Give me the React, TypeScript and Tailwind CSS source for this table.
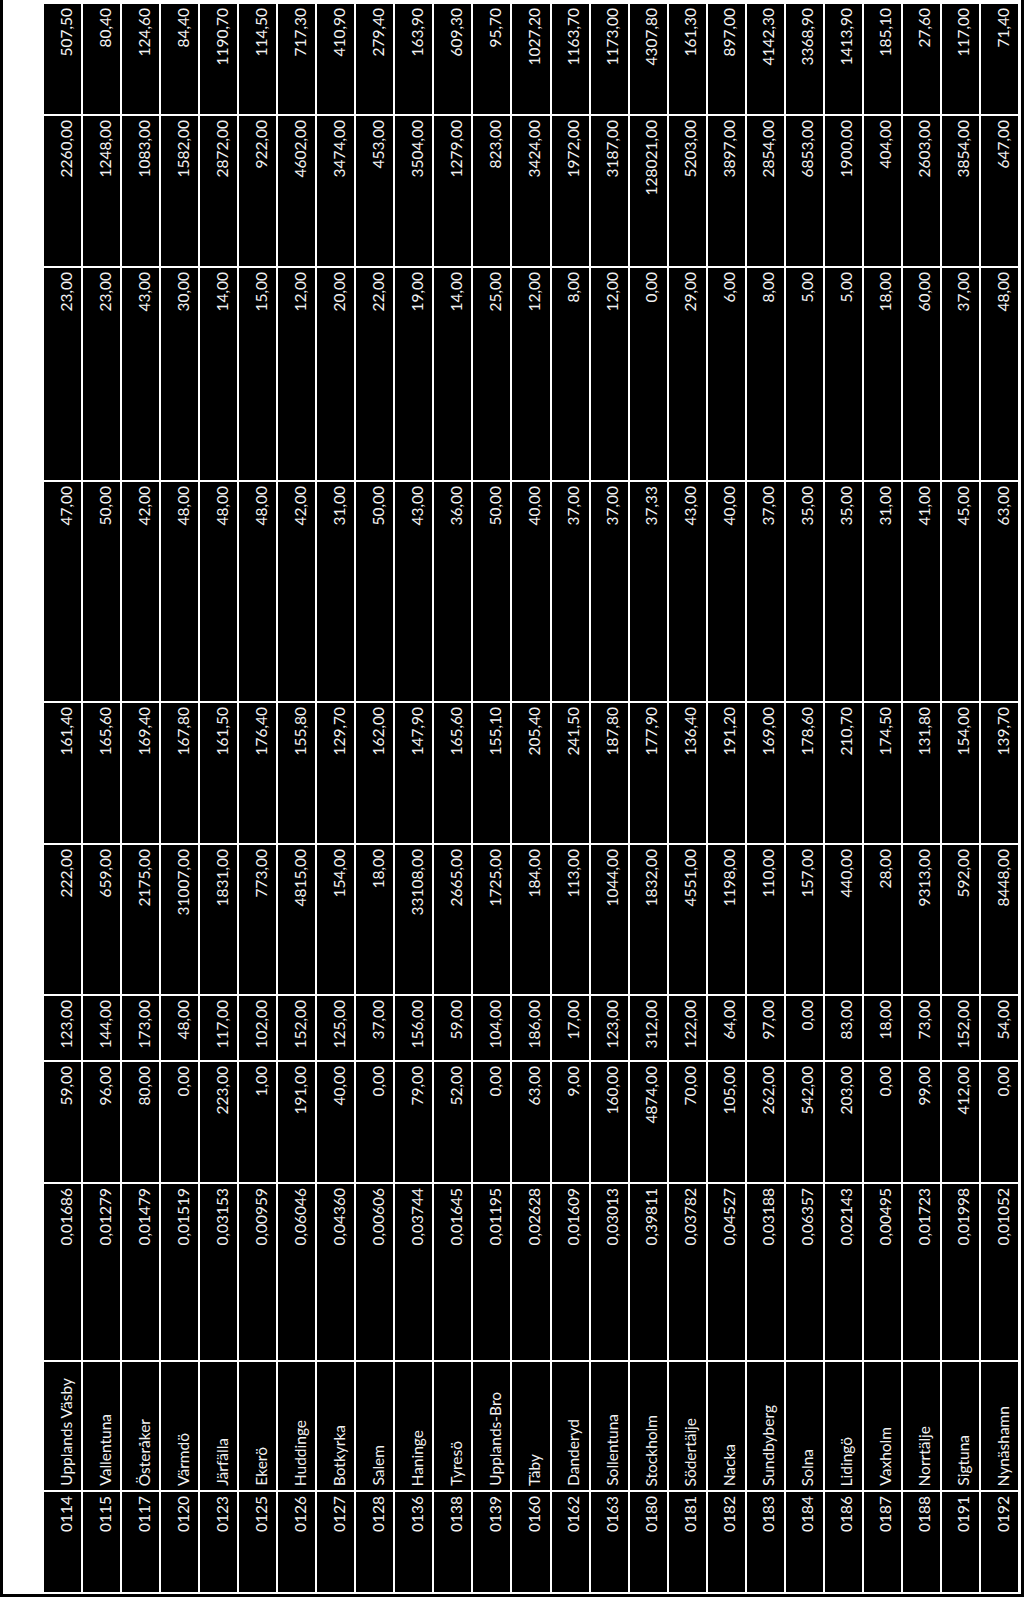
type Kommun = {
  code: string;
  name: string;
  vals: string[];
};

// vals in original column order (left to right in the unrotated sheet)
const kommuner: Kommun[] = [
  { code: '0114', name: 'Upplands Väsby', vals: ['0,01686', '59,00', '123,00', '222,00', '161,40', '47,00', '23,00', '2260,00', '507,50'] },
  { code: '0115', name: 'Vallentuna', vals: ['0,01279', '96,00', '144,00', '659,00', '165,60', '50,00', '23,00', '1248,00', '80,40'] },
  { code: '0117', name: 'Österåker', vals: ['0,01479', '80,00', '173,00', '2175,00', '169,40', '42,00', '43,00', '1083,00', '124,60'] },
  { code: '0120', name: 'Värmdö', vals: ['0,01519', '0,00', '48,00', '31007,00', '167,80', '48,00', '30,00', '1582,00', '84,40'] },
  { code: '0123', name: 'Järfälla', vals: ['0,03153', '223,00', '117,00', '1831,00', '161,50', '48,00', '14,00', '2872,00', '1190,70'] },
  { code: '0125', name: 'Ekerö', vals: ['0,00959', '1,00', '102,00', '773,00', '176,40', '48,00', '15,00', '922,00', '114,50'] },
  { code: '0126', name: 'Huddinge', vals: ['0,06046', '191,00', '152,00', '4815,00', '155,80', '42,00', '12,00', '4602,00', '717,30'] },
  { code: '0127', name: 'Botkyrka', vals: ['0,04360', '40,00', '125,00', '154,00', '129,70', '31,00', '20,00', '3474,00', '410,90'] },
  { code: '0128', name: 'Salem', vals: ['0,00606', '0,00', '37,00', '18,00', '162,00', '50,00', '22,00', '453,00', '279,40'] },
  { code: '0136', name: 'Haninge', vals: ['0,03744', '79,00', '156,00', '33108,00', '147,90', '43,00', '19,00', '3504,00', '163,90'] },
  { code: '0138', name: 'Tyresö', vals: ['0,01645', '52,00', '59,00', '2665,00', '165,60', '36,00', '14,00', '1279,00', '609,30'] },
  { code: '0139', name: 'Upplands-Bro', vals: ['0,01195', '0,00', '104,00', '1725,00', '155,10', '50,00', '25,00', '823,00', '95,70'] },
  { code: '0160', name: 'Täby', vals: ['0,02628', '63,00', '186,00', '184,00', '205,40', '40,00', '12,00', '3424,00', '1027,20'] },
  { code: '0162', name: 'Danderyd', vals: ['0,01609', '9,00', '17,00', '113,00', '241,50', '37,00', '8,00', '1972,00', '1163,70'] },
  { code: '0163', name: 'Sollentuna', vals: ['0,03013', '160,00', '123,00', '1044,00', '187,80', '37,00', '12,00', '3187,00', '1173,00'] },
  { code: '0180', name: 'Stockholm', vals: ['0,39811', '4874,00', '312,00', '1832,00', '177,90', '37,33', '0,00', '128021,00', '4307,80'] },
  { code: '0181', name: 'Södertälje', vals: ['0,03782', '70,00', '122,00', '4551,00', '136,40', '43,00', '29,00', '5203,00', '161,30'] },
  { code: '0182', name: 'Nacka', vals: ['0,04527', '105,00', '64,00', '1198,00', '191,20', '40,00', '6,00', '3897,00', '897,00'] },
  { code: '0183', name: 'Sundbyberg', vals: ['0,03188', '262,00', '97,00', '110,00', '169,00', '37,00', '8,00', '2854,00', '4142,30'] },
  { code: '0184', name: 'Solna', vals: ['0,06357', '542,00', '0,00', '157,00', '178,60', '35,00', '5,00', '6853,00', '3368,90'] },
  { code: '0186', name: 'Lidingö', vals: ['0,02143', '203,00', '83,00', '440,00', '210,70', '35,00', '5,00', '1900,00', '1413,90'] },
  { code: '0187', name: 'Vaxholm', vals: ['0,00495', '0,00', '18,00', '28,00', '174,50', '31,00', '18,00', '404,00', '185,10'] },
  { code: '0188', name: 'Norrtälje', vals: ['0,01723', '99,00', '73,00', '9313,00', '131,80', '41,00', '60,00', '2603,00', '27,60'] },
  { code: '0191', name: 'Sigtuna', vals: ['0,01998', '412,00', '152,00', '592,00', '154,00', '45,00', '37,00', '3854,00', '117,00'] },
  { code: '0192', name: 'Nynäshamn', vals: ['0,01052', '0,00', '54,00', '8448,00', '139,70', '63,00', '48,00', '647,00', '71,40'] },
];

// the sheet is shown turned a quarter to the left, so each row is a column here
function Cell({ text, start }: { text: string; start?: boolean }) {
  return (
    <div
      className={
        'flex justify-end overflow-hidden bg-black pr-[7px] ' +
        (start ? 'items-end pb-[4px]' : 'items-start pt-[4px]')
      }
    >
      <span className="whitespace-nowrap text-[15.5px] leading-none text-[#f2f2f2] [writing-mode:vertical-rl] rotate-180">
        {text}
      </span>
    </div>
  );
}

export default function App() {
  return (
    <div className="w-[1024px] h-[1599px] bg-white font-['Lato','Liberation_Sans',sans-serif]">
      <div className="flex h-[1597px] border-l-[3px] border-r-[3px] border-b-[3px] border-black">
        <div className="w-[41px] shrink-0 bg-white" />
        <div className="grid flex-1 grid-flow-col grid-cols-[repeat(25,minmax(0,1fr))] grid-rows-[110px_150px_212px_219px_140px_149px_64px_120px_176px_128px_100px] gap-[2px] bg-white pt-[4px] pr-[3px] pb-[2px]">
          {kommuner.map((k) => (
            <div key={k.code} className="contents">
              {[...k.vals].reverse().map((v, i) => (
                <Cell key={i} text={v} />
              ))}
              <Cell text={k.name} start />
              <Cell text={k.code} />
            </div>
          ))}
        </div>
      </div>
    </div>
  );
}
